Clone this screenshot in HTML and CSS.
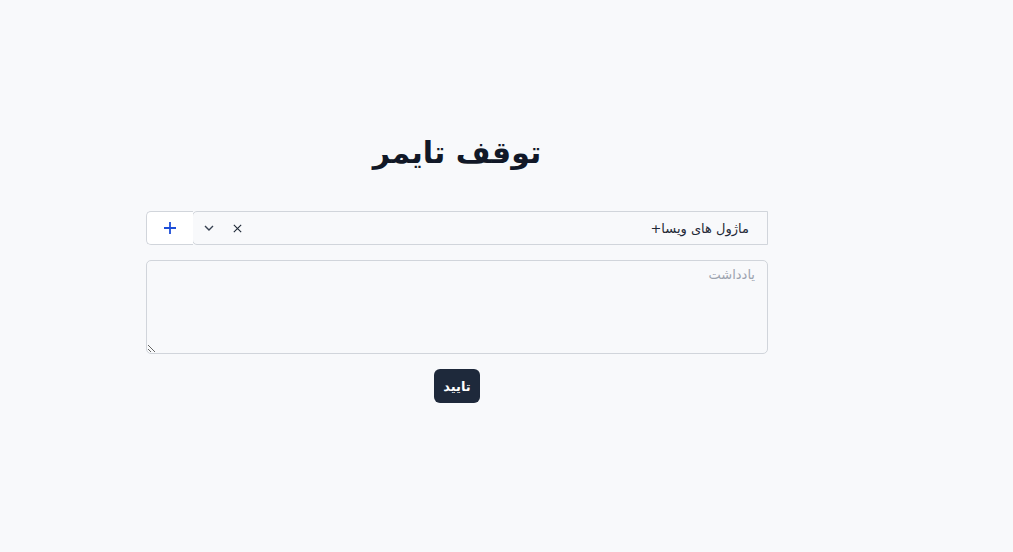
FILE: index.html
```html
<!DOCTYPE html>
<html lang="fa" dir="rtl">
<head>
<meta charset="utf-8">
<link rel="stylesheet" href="styles.css">
</head>
<body>
<div class="page">
  <main class="panel">
    <h1 class="title">توقف تایمر</h1>
    <div class="select-row">
      <div class="select">
        <div class="select-value">ماژول های ویسا+</div>
        <div class="select-indicators">
          <span class="ind clear">
            <svg width="11" height="11" viewBox="0 0 12 12"><path d="M2 2L10 10M10 2L2 10" stroke="#1f2937" stroke-width="1.2" fill="none"/></svg>
          </span>
          <span class="ind chevron">
            <svg width="12" height="12" viewBox="0 0 12 12"><path d="M2 4L6 8L10 4" stroke="#374151" stroke-width="1.4" fill="none"/></svg>
          </span>
        </div>
      </div>
      <button class="add-btn" type="button">
        <svg width="14" height="14" viewBox="0 0 14 14"><path d="M7 1V13M1 7H13" stroke="#1d4ed8" stroke-width="1.8" fill="none"/></svg>
      </button>
    </div>
    <textarea class="note" placeholder="یادداشت"></textarea>
    <div class="actions">
      <button class="submit" type="button">تایید</button>
    </div>
  </main>
</div>
</body>
</html>
```
FILE: styles.css
```css
* { box-sizing: border-box; }
html, body { margin: 0; padding: 0; }
body {
  background: #f8f9fb;
  font-family: "DejaVu Sans", "Noto Sans", sans-serif;
  color: #111827;
  width: 1013px;
  height: 552px;
  overflow: hidden;
}
.page {
  display: flex;
  justify-content: flex-end;
  padding: 128px 245px 0 0;
  direction: ltr;
}
.panel {
  width: 622px;
  direction: rtl;
  display: flex;
  flex-direction: column;
}
.title {
  margin: 0 0 33px;
  text-align: center;
  font-size: 30px;
  font-weight: 700;
  line-height: 50px;
  color: #111827;
}
.select-row {
  display: flex;
  height: 34px;
}
.select {
  flex: 1;
  display: flex;
  align-items: center;
  border: 1px solid #d1d5db;
  background: #f8f9fb;
  border-radius: 5px 0 0 5px;
}
.select-value {
  flex: 1;
  padding-right: 18px;
  font-size: 13px;
  color: #1f2937;
}
.select-indicators {
  display: flex;
  align-items: center;
  gap: 17px;
  padding-left: 10px;
}
.ind { display: flex; align-items: center; }
.add-btn {
  width: 47px;
  height: 34px;
  margin-right: -1px;
  border: 1px solid #d1d5db;
  border-right: none;
  border-radius: 5px 0 0 5px;
  background: #ffffff;
  display: flex;
  align-items: center;
  justify-content: center;
  padding: 0;
}
.note {
  margin-top: 15px;
  width: 622px;
  height: 94px;
  border: 1px solid #d1d5db;
  border-radius: 5px;
  background: #f8f9fb;
  padding: 6px 12px;
  font-family: inherit;
  font-size: 13px;
  resize: vertical;
}
.note::placeholder { color: #9ca3af; }
.actions {
  display: flex;
  justify-content: center;
  margin-top: 15px;
}
.submit {
  background: #1e293b;
  color: #ffffff;
  border: none;
  border-radius: 6px;
  height: 34px;
  padding: 0 9px;
  font-family: inherit;
  font-size: 13px;
  font-weight: 700;
}
```
